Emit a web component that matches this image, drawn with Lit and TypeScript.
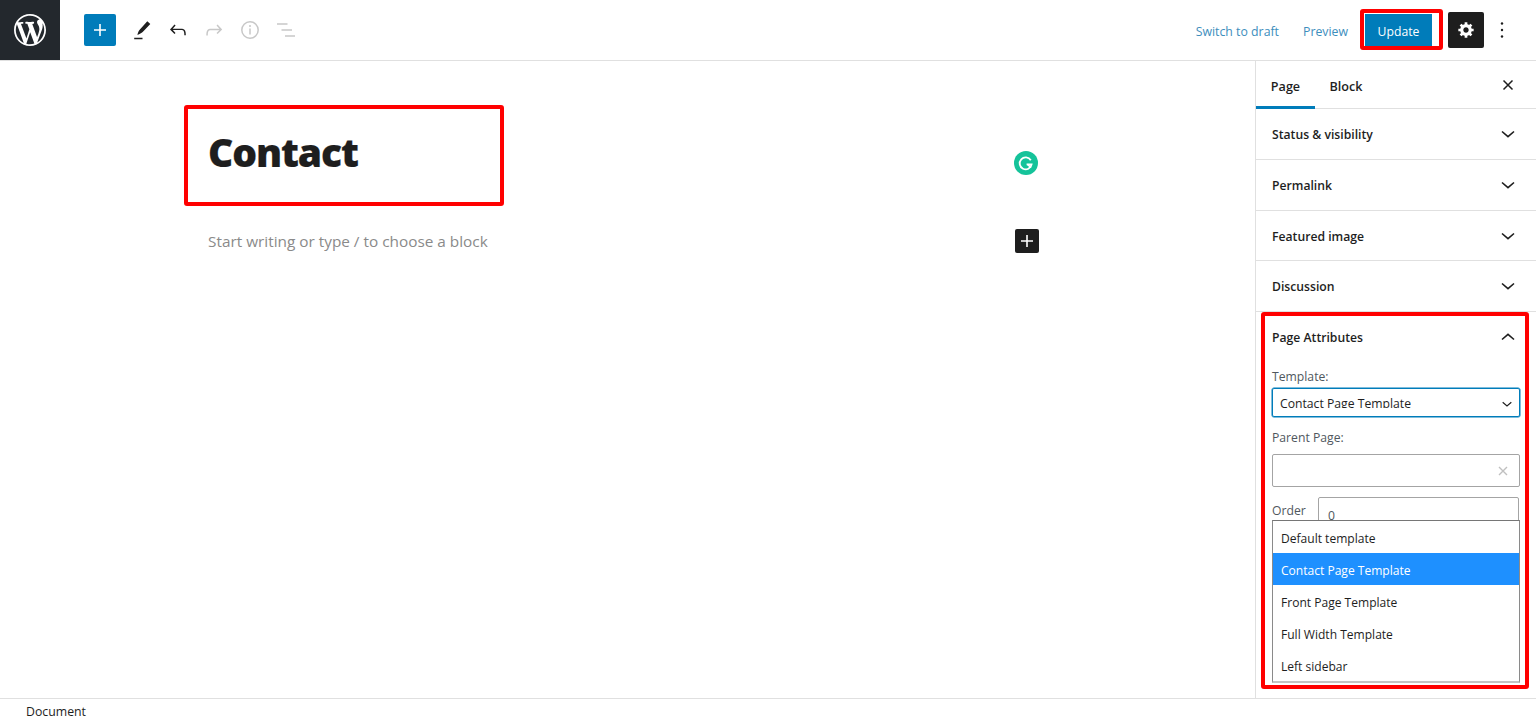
import { LitElement, html, css, svg } from "lit";
import { customElement } from "lit/decorators.js";

const chevDown = svg`<path d="M6 9.5l6 5.2 6-5.2" fill="none" stroke="currentColor" stroke-width="1.6"/>`;
const chevUp = svg`<path d="M6 14.5l6-5.2 6 5.2" fill="none" stroke="currentColor" stroke-width="1.6"/>`;

@customElement("app-root")
export class AppRoot extends LitElement {
  static styles = css`
    :host {
      display: grid;
      grid-template-rows: 61px 1fr 24px;
      width: 1536px;
      height: 722px;
      overflow: hidden;
      position: relative;
      background: #fff;
      color: #1e1e1e;
      font-family: "Open Sans", "Noto Sans", sans-serif;
      font-size: 13px;
    }
    svg { display: block; }
    .top {
      display: flex;
      align-items: center;
      border-bottom: 1px solid #e0e0e0;
      box-sizing: border-box;
      height: 61px;
    }
    .logo {
      width: 60px;
      height: 60px;
      background: #23282d;
      display: flex;
      align-items: center;
      justify-content: center;
      color: #fff;
      flex: none;
    }
    .tools { display: flex; align-items: center; margin-left: 24px; }
    .add {
      width: 32px;
      height: 32px;
      border-radius: 2px;
      background: #007cba;
      color: #fff;
      display: flex;
      align-items: center;
      justify-content: center;
    }
    .tool { width: 24px; height: 24px; color: #1e1e1e; flex: none; }
    .tool.off { color: #c8c8c8; }
    .pencil { margin-left: 14px; }
    .undo { margin-left: 12px; }
    .redo, .info { margin-left: 12px; }
    .list { margin-left: 13px; }
    .actions { margin-left: auto; display: flex; align-items: center; }
    .link { color: #3d8ebd; font-size: 12.3px; padding-top: 2px; }
    .preview { margin-left: 24px; }
    .update {
      margin-left: 17px;
      width: 67px;
      height: 32px;
      margin-right: 16px;
      padding-top: 2px;
      box-sizing: border-box;
      background: #007cba;
      color: #fff;
      display: flex;
      align-items: center;
      justify-content: center;
      font-size: 12.2px;
    }
    .gear {
      width: 36px;
      height: 36px;
      border-radius: 2px;
      background: #1e1e1e;
      color: #fff;
      display: flex;
      align-items: center;
      justify-content: center;
    }
    .more { width: 24px; height: 24px; margin: 0 22px 0 6px; color: #1e1e1e; }
    .main { display: flex; min-height: 0; }
    .editor { flex: 1; position: relative; padding: 63px 0 0 208px; box-sizing: border-box; }
    .title {
      font-family: "Noto Sans", "Open Sans", sans-serif;
      font-weight: 900;
      font-size: 39px;
      line-height: 56px;
      letter-spacing: -1.1px;
      -webkit-text-stroke: 0.2px #1e1e1e;
      color: #1e1e1e;
    }
    .hint { margin-top: 49px; font-size: 15.35px; line-height: 24px; color: #8a8a8a; }
    .grammarly {
      position: absolute;
      left: 1014px;
      top: 90px;
      width: 24px;
      height: 24px;
    }
    .inserter {
      position: absolute;
      left: 1015px;
      top: 168px;
      width: 24px;
      height: 24px;
      border-radius: 2px;
      background: #1e1e1e;
      color: #fff;
      display: flex;
      align-items: center;
      justify-content: center;
    }
    .side {
      width: 281px;
      flex: none;
      border-left: 1px solid #e0e0e0;
      box-sizing: border-box;
      position: relative;
      overflow: hidden;
    }
    .tabs {
      display: flex;
      align-items: flex-start;
      height: 48px;
      box-sizing: border-box;
      border-bottom: 1px solid #e0e0e0;
    }
    .tab {
      display: flex;
      align-items: center;
      justify-content: center;
      height: 47px;
      box-sizing: border-box;
      font-weight: 600;
      font-size: 12.6px;
      color: #1e1e1e;
    }
    .tab.page { width: 59px; height: 48px; border-bottom: 3px solid #007cba; padding-top: 5px; }
    .tab.block { width: 60px; padding: 3px 0 0 2px; }
    .close { margin-left: auto; margin-right: 16px; margin-top: 12px; width: 24px; height: 24px; }
    .panel {
      display: flex;
      align-items: center;
      justify-content: space-between;
      height: 50px;
      padding: 0 16px;
      border-bottom: 1px solid #e0e0e0;
      font-weight: 600;
      font-size: 12.2px;
      color: #1e1e1e;
    }
    .panel.short { height: 48px; padding-top: 1px; }
    .panel.open { border-bottom: 0; }
    .body { padding: 6px 16px 0; font-size: 12.2px; color: #50575e; }
    .label { line-height: 18px; height: 18px; }
    .select {
      margin-top: 2px;
      height: 29px;
      box-sizing: border-box;
      border: 1px solid #007cba;
      box-shadow: 0 0 0 0.5px #007cba;
      border-radius: 2px;
      display: flex;
      align-items: flex-start;
      justify-content: space-between;
      padding: 5px 0 0 7px;
      color: #1e1e1e;
      width: 248px;
    }
    .clip { height: 14px; line-height: 19px; overflow: hidden; }
    .select svg { margin: -2px 0 0 0; transform: scale(0.72); }
    .parent-label { margin-top: 12px; }
    .parent {
      margin-top: 7px;
      width: 248px;
      height: 33px;
      box-sizing: border-box;
      border: 1px solid #a4a4a4;
      border-radius: 2px;
      display: flex;
      align-items: center;
      justify-content: flex-end;
      padding-right: 9px;
      color: #c0c0c0;
    }
    .order { display: flex; margin-top: 10px; width: 248px; }
    .order span { width: 46px; line-height: 18px; padding-top: 5px; flex: none; }
    .order div {
      flex: 1;
      margin-right: 1px;
      height: 40px;
      box-sizing: border-box;
      border: 1px solid #a4a4a4;
      border-radius: 2px;
      padding: 9px 0 0 9px;
      color: #50575e;
    }
    .menu {
      position: absolute;
      left: 16px;
      top: 459px;
      width: 248px;
      box-sizing: border-box;
      background: #fff;
      border: 1px solid #8a8a8a;
      border-bottom: 2px solid #c4c4c4;
      border-top-color: #767676;
      font-size: 12.05px;
      color: #1e1e1e;
    }
    .opt { height: 32px; line-height: 35px; padding-left: 8px; }
    .opt.sel { background: #1e90ff; color: #fff; }
    .foot {
      border-top: 1px solid #e0e0e0;
      padding-left: 26px;
      line-height: 26px;
      font-size: 12.3px;
      color: #1e1e1e;
    }
    .mark {
      position: absolute;
      box-sizing: border-box;
      border: 4px solid #f00;
      border-radius: 3px;
      pointer-events: none;
    }
    .m-title { left: 184px; top: 105px; width: 320px; height: 101px; }
    .m-update { left: 1360px; top: 9px; width: 83px; height: 41px; }
    .m-attrs { left: 1261px; top: 312px; width: 268px; height: 377px; }
  `;

  render() {
    return html`
      <header class="top">
        <div class="logo">
          <svg width="32" height="32" viewBox="0 0 20 20" fill="currentColor"><path d="M20 10c0-5.51-4.49-10-10-10C4.48 0 0 4.49 0 10c0 5.52 4.48 10 10 10 5.51 0 10-4.48 10-10zM7.78 15.37L4.37 6.22c.55-.02 1.17-.08 1.17-.08.5-.06.44-1.13-.06-1.11 0 0-1.45.11-2.37.11-.18 0-.37 0-.58-.01C4.12 2.69 6.87 1.11 10 1.11c2.33 0 4.45.87 6.05 2.34-.68-.11-1.65.39-1.65 1.58 0 .74.45 1.36.9 2.1.35.61.55 1.36.55 2.46 0 1.49-1.4 5-1.4 5l-3.03-8.37c.54-.02.82-.17.82-.17.5-.05.44-1.25-.06-1.22 0 0-1.44.12-2.38.12-.87 0-2.33-.12-2.33-.12-.5-.03-.56 1.2-.06 1.22l.92.08 1.26 3.41zM17.41 10c.24-.64.74-1.87.43-4.25.7 1.29 1.05 2.71 1.05 4.25 0 3.29-1.73 6.24-4.4 7.78.97-2.59 1.94-5.2 2.92-7.78zM6.1 18.09C3.12 16.65 1.11 13.53 1.11 10c0-1.3.23-2.48.72-3.59C3.25 10.3 4.67 14.2 6.1 18.09zm4.03-6.63l2.58 6.98c-.86.29-1.76.45-2.71.45-.79 0-1.57-.11-2.29-.33.81-2.38 1.62-4.74 2.42-7.1z"/></svg>
        </div>
        <div class="tools">
          <div class="add">
            <svg width="24" height="24" viewBox="0 0 24 24" fill="currentColor"><path d="M18 11.2h-5.2V6h-1.6v5.2H6v1.6h5.2V18h1.6v-5.2H18z"/></svg>
          </div>
          <svg class="tool pencil" viewBox="0 0 24 24" fill="currentColor"><path d="M17.3 3.2l3 2.7-7.6 8.2c-1.2 1.2-3 2.1-5.3 2.8.5-2.3 1.3-4.2 2.5-5.4zM4.2 19.8h8.3v1.5H4.2z"/></svg>
          <svg class="tool undo" viewBox="0 0 24 24" fill="currentColor"><path d="M18.3 11.7c-.6-.6-1.4-.9-2.3-.9H6.7l2.9-3.3-1.1-1-4.5 5L8.5 16l1-1-2.7-3H16c.5 0 .9.2 1.3.5 1 1 1 3.4 1 4.5v.3h1.5v-.2c0-1.5 0-4.3-1.5-5.7z"/></svg>
          <svg class="tool off redo" viewBox="0 0 24 24" fill="currentColor"><path d="M15.6 6.5l-1.1 1 2.9 3.3H8c-.9 0-1.7.3-2.3.9-1.4 1.5-1.4 4.2-1.4 5.6v.2h1.5v-.3c0-1.1 0-3.5 1-4.5.3-.3.7-.5 1.3-.5h9.2L14.5 15l1.1 1.1 4.6-4.6-4.6-5z"/></svg>
          <svg class="tool off info" viewBox="0 0 24 24" fill="none" stroke="currentColor" stroke-width="1.5"><circle cx="12" cy="12" r="8.2"/><path d="M12 10.5v6M12 7v2"/></svg>
          <svg class="tool off list" viewBox="0 0 24 24" fill="none" stroke="currentColor" stroke-width="1.5"><path d="M2 6h10.5M6.5 12H17M10 18h10"/></svg>
        </div>
        <div class="actions">
          <span class="link">Switch to draft</span>
          <span class="link preview">Preview</span>
          <div class="update">Update</div>
          <div class="gear">
            <svg width="18" height="18" viewBox="0 0 20 20" fill="currentColor"><path d="M18 12h-2.18c-.17.7-.44 1.35-.81 1.93l1.54 1.54-2.1 2.1-1.54-1.54c-.58.36-1.23.63-1.91.79V19H8v-2.18c-.68-.16-1.33-.43-1.91-.79l-1.54 1.54-2.12-2.12 1.54-1.54c-.36-.58-.63-1.23-.79-1.91H1V9.03h2.17c.16-.7.44-1.35.8-1.94L2.43 5.55l2.1-2.1 1.54 1.54c.58-.37 1.24-.64 1.93-.81V2h3v2.18c.68.16 1.33.43 1.91.79l1.54-1.54 2.12 2.12-1.54 1.54c.36.59.64 1.24.8 1.94H18V12zm-8.5 1.5c1.66 0 3-1.34 3-3s-1.34-3-3-3-3 1.34-3 3 1.34 3 3 3z" transform="translate(.5 -.5)"/></svg>
          </div>
          <svg class="more" viewBox="0 0 24 24" fill="currentColor"><circle cx="12" cy="5.5" r="1.2"/><circle cx="12" cy="12" r="1.2"/><circle cx="12" cy="18.5" r="1.2"/></svg>
        </div>
      </header>

      <div class="main">
        <section class="editor">
          <div class="title">Contact</div>
          <div class="hint">Start writing or type / to choose a block</div>
          <svg class="grammarly" viewBox="0 0 24 24"><circle cx="12" cy="12" r="12" fill="#15c39a"/><path d="M16.8 9.2A6 6 0 1 0 17.6 13.4h-5" fill="none" stroke="#fff" stroke-width="1.8"/><path d="M13.5 13.4l3.6 3.2" fill="none" stroke="#fff" stroke-width="1.6"/></svg>
          <div class="inserter">
            <svg width="24" height="24" viewBox="0 0 24 24" fill="currentColor"><path d="M18 11.2h-5.2V6h-1.6v5.2H6v1.6h5.2V18h1.6v-5.2H18z"/></svg>
          </div>
        </section>
        <aside class="side">
          <div class="tabs">
            <div class="tab page">Page</div>
            <div class="tab block">Block</div>
            <svg class="close" viewBox="0 0 24 24" fill="none" stroke="currentColor" stroke-width="1.5"><path d="M7.5 7.5l9 9M16.5 7.5l-9 9"/></svg>
          </div>
          <div class="panel">Status &amp; visibility <svg width="24" height="24" viewBox="0 0 24 24">${chevDown}</svg></div>
          <div class="panel">Permalink <svg width="24" height="24" viewBox="0 0 24 24">${chevDown}</svg></div>
          <div class="panel short">Featured image <svg width="24" height="24" viewBox="0 0 24 24">${chevDown}</svg></div>
          <div class="panel">Discussion <svg width="24" height="24" viewBox="0 0 24 24">${chevDown}</svg></div>
          <div class="panel open">Page Attributes <svg width="24" height="24" viewBox="0 0 24 24">${chevUp}</svg></div>
          <div class="body">
            <div class="label">Template:</div>
            <div class="select">
              <span class="clip">Contact Page Template</span>
              <svg width="24" height="24" viewBox="0 0 24 24">${chevDown}</svg>
            </div>
            <div class="label parent-label">Parent Page:</div>
            <div class="parent">
              <svg width="14" height="14" viewBox="0 0 14 14" fill="none" stroke="currentColor" stroke-width="1.4"><path d="M3 3l8 8M11 3l-8 8"/></svg>
            </div>
            <div class="order"><span>Order</span><div>0</div></div>
          </div>
          <div class="menu">
            <div class="opt">Default template</div>
            <div class="opt sel">Contact Page Template</div>
            <div class="opt">Front Page Template</div>
            <div class="opt">Full Width Template</div>
            <div class="opt">Left sidebar</div>
          </div>
        </aside>
      </div>

      <footer class="foot">Document</footer>

      <div class="mark m-title"></div>
      <div class="mark m-update"></div>
      <div class="mark m-attrs"></div>
    `;
  }
}
